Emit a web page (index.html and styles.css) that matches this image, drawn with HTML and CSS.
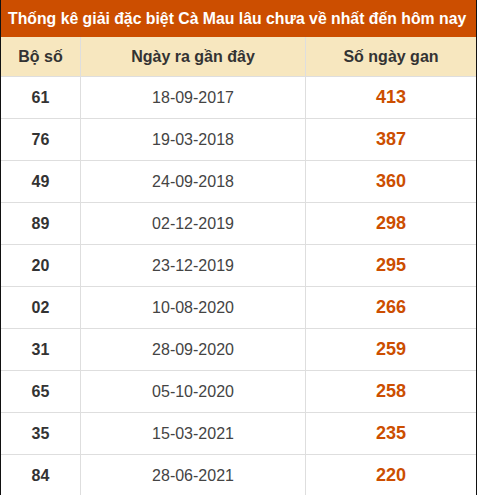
FILE: index.html
```html
<!DOCTYPE html>
<html lang="vi">
<head>
<meta charset="utf-8">
<title>Thống kê giải đặc biệt Cà Mau</title>
<link rel="stylesheet" href="styles.css">
</head>
<body>
<div class="box">
  <div class="title">Thống kê giải đặc biệt Cà Mau lâu chưa về nhất đến hôm nay</div>
  <table class="tbl">
    <thead>
      <tr><th class="c1">Bộ số</th><th class="c2">Ngày ra gần đây</th><th class="c3">Số ngày gan</th></tr>
    </thead>
    <tbody>
      <tr><td class="num">61</td><td class="date">18-09-2017</td><td class="gan">413</td></tr>
      <tr><td class="num">76</td><td class="date">19-03-2018</td><td class="gan">387</td></tr>
      <tr><td class="num">49</td><td class="date">24-09-2018</td><td class="gan">360</td></tr>
      <tr><td class="num">89</td><td class="date">02-12-2019</td><td class="gan">298</td></tr>
      <tr><td class="num">20</td><td class="date">23-12-2019</td><td class="gan">295</td></tr>
      <tr><td class="num">02</td><td class="date">10-08-2020</td><td class="gan">266</td></tr>
      <tr><td class="num">31</td><td class="date">28-09-2020</td><td class="gan">259</td></tr>
      <tr><td class="num">65</td><td class="date">05-10-2020</td><td class="gan">258</td></tr>
      <tr><td class="num">35</td><td class="date">15-03-2021</td><td class="gan">235</td></tr>
      <tr><td class="num">84</td><td class="date">28-06-2021</td><td class="gan">220</td></tr>
    </tbody>
  </table>
</div>
</body>
</html>
```
FILE: styles.css
```css
html, body {
  margin: 0;
  padding: 0;
  background: #ffffff;
}
body {
  font-family: "Liberation Sans", Arial, sans-serif;
}
.box {
  width: 477px;
  box-sizing: border-box;
  border-left: 1px solid #111;
  border-right: 1px solid #111;
  border-bottom: 1px solid #111;
}
.title {
  height: 37px;
  background: #cc4e00;
  color: #ffffff;
  font-weight: bold;
  font-size: 15.8px;
  line-height: 37px;
  padding-left: 7px;
  white-space: nowrap;
  overflow: hidden;
}
.tbl {
  width: 100%;
  border-collapse: collapse;
  table-layout: fixed;
}
.tbl th, .tbl td {
  border: 1px solid #dedede;
  text-align: center;
  padding: 0;
}
.tbl tr > :first-child { border-left: none; }
.tbl tr > :last-child { border-right: none; }
.tbl tbody tr:last-child td { border-bottom: none; }
.tbl th {
  border-top: none;
  background: #f7e7bf;
  color: #333;
  font-weight: bold;
  font-size: 16px;
  height: 39px;
}
.c1 { width: 79px; }
.c2 { width: 224px; }
.tbl td {
  height: 41px;
  font-size: 16px;
  color: #333;
}
.tbl .num { font-weight: bold; }
.tbl .date { color: #444; }
.tbl .gan {
  color: #cc4e00;
  font-weight: bold;
  font-size: 18px;
}
```
